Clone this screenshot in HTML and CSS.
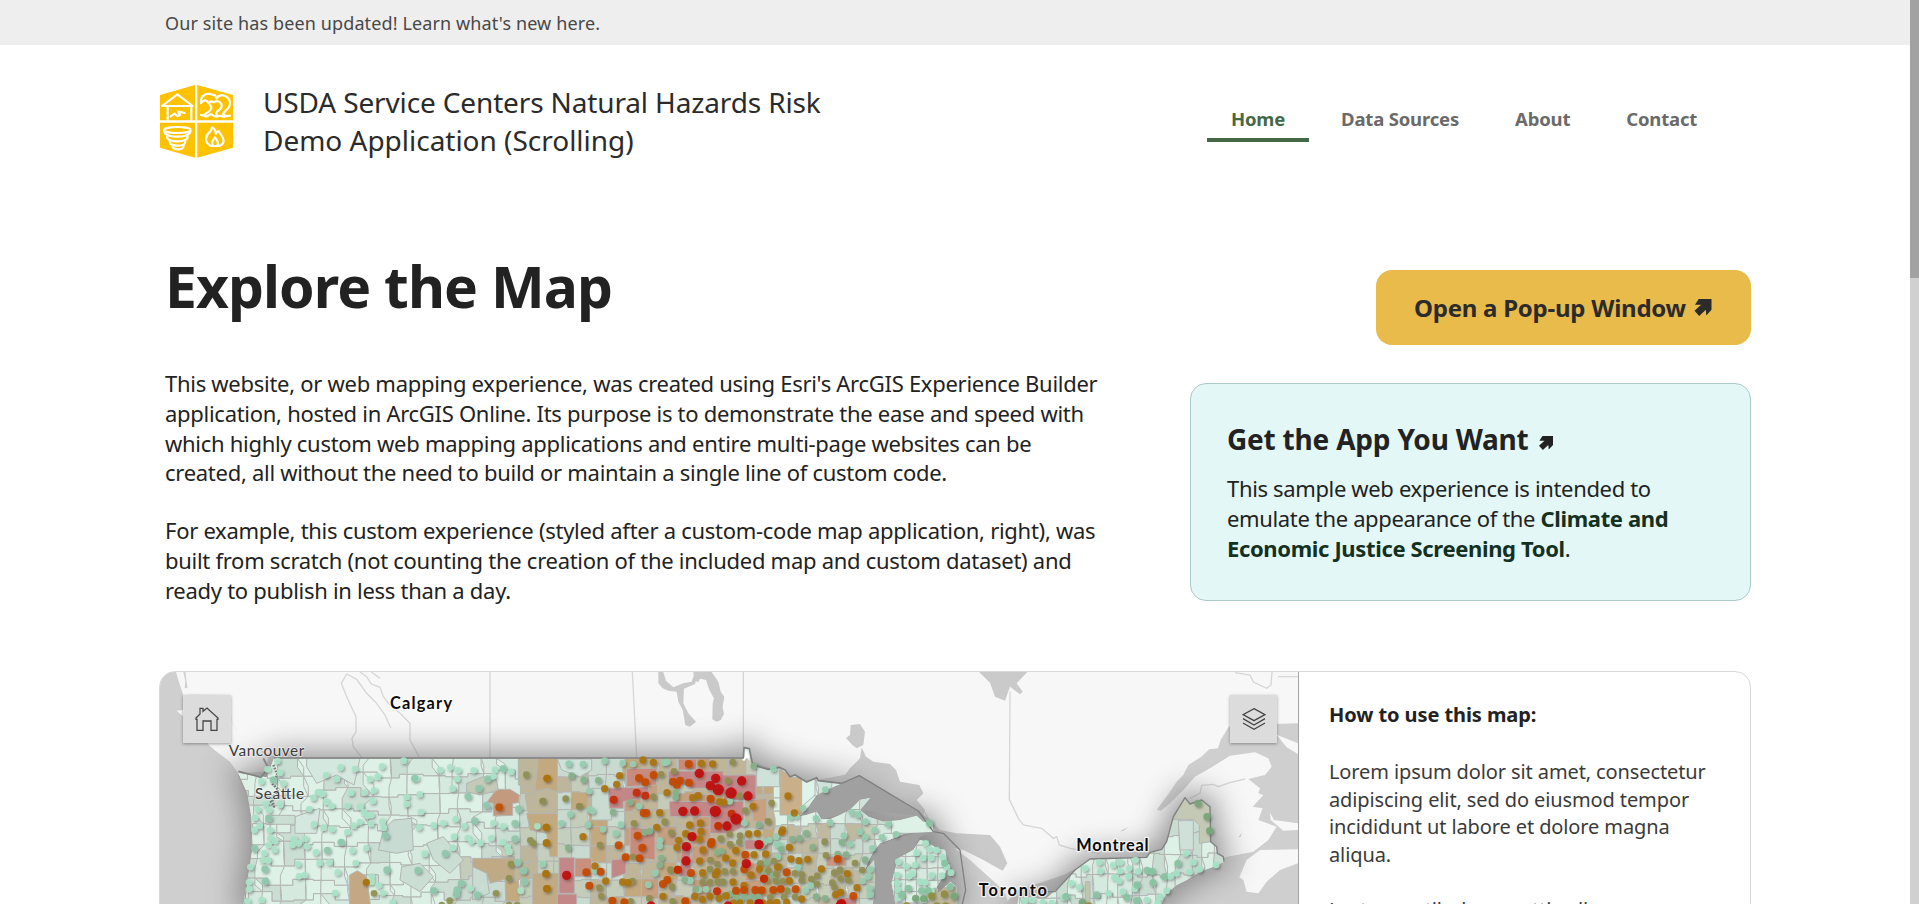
FILE: index.html
```html
<!DOCTYPE html>
<html lang="en">
<head>
<meta charset="utf-8">
<title>USDA Service Centers Natural Hazards Risk</title>
<link rel="stylesheet" href="styles.css">
</head>
<body>
<div class="banner"><span class="banner-text">Our site has been updated! Learn what's new here.</span></div>

<header class="header">
  <svg class="logo" viewBox="30 28 219 219" aria-hidden="true">
    <g fill="#ffc200">
      <path d="M30 58L135 28V134H30Z"/><path d="M142 28L249 58V134H142Z"/>
      <path d="M30 141H135V246L30 216Z"/><path d="M142 141H249V216L142 246Z"/>
    </g>
    <g fill="none" stroke="#fff" stroke-width="6.500" stroke-linejoin="round" stroke-linecap="round">
      <path d="M36 91L82 56L128 91Z M53 91V133 M124 91V133"/>
      <path d="M62 122L74 114L82 122L90 118L84 108L104 112"/>
      <path d="M153 82C150 58 172 50 187 57C198 57 197 62 200 68C211 51 239 59 240 82C241 98 226 103 219 115C222 122 232 122 240 120"/>
      <path d="M153 82C161 72 170 71 176 83C181 76 186 76 192 80C198 74 207 76 213 83C220 92 210 102 201 108C197 114 199 121 207 121"/>
      <path d="M180 88C190 100 177 107 170 112C164 118 160 122 153 118M164 121C175 127 179 110 186 117C192 124 199 124 207 121C212 118 215 123 224 124"/>
      <ellipse cx="82" cy="163" rx="40" ry="9"/>
      <path d="M43 168C45 188 119 188 121 168 M51 183C51 202 113 202 113 183 M59 198C60 214 106 214 106 198 M67 210C68 225 101 225 101 210"/>
      <path d="M183 211C159 199 168 177 181 167C186 162 184 158 187 155C196 160 197 168 197 174C203 171 201 166 205 166C214 178 234 202 207 211Z"/>
      <path d="M190 211C181 201 190 193 195 185C202 194 208 205 200 211"/>
    </g>
  </svg>
  <div class="site-title">USDA Service Centers Natural Hazards Risk<br><span class="site-title-sub">Demo Application (Scrolling)</span></div>
  <nav class="nav">
    <a class="nav-item active">Home</a><a class="nav-item">Data Sources</a><a class="nav-item">About</a><a class="nav-item">Contact</a>
  </nav>
</header>

<main class="main">
  <section class="intro">
    <div class="intro-copy">
      <h1 class="heading">Explore the Map</h1>
      <p class="para">This website, or web mapping experience, was created using Esri's ArcGIS Experience Builder<br>application, hosted in ArcGIS Online. Its purpose is to demonstrate the ease and speed with<br>which highly custom web mapping applications and entire multi-page websites can be<br>created, all without the need to build or maintain a single line of custom code.</p>
      <p class="para">For example, this custom experience (styled after a custom-code map application, right), was<br>built from scratch (not counting the creation of the included map and custom dataset) and<br>ready to publish in less than a day.</p>
    </div>
    <aside class="aside">
      <a class="popup-btn"><span class="popup-label">Open a Pop-up Window</span>
        <svg class="arrow-lg" viewBox="0 0 18 18"><path d="M4.500 0H18V11.500L12.500 17.500L12 11.500L5 18L0 12.500L7 6.200H.500Z" fill="#2b2b2b"/></svg></a>
      <div class="card">
        <h2 class="card-title"><span class="card-label">Get the App You Want</span>
          <svg class="arrow-sm" viewBox="0 0 18 18"><path d="M4.500 0H18V11.500L12.500 17.500L12 11.500L5 18L0 12.500L7 6.200H.500Z" fill="#222"/></svg></h2>
        <p class="card-text">This sample web experience is intended to<br>emulate the appearance of the <b>Climate and<br>Economic Justice Screening Tool</b>.</p>
      </div>
    </aside>
  </section>

  <section class="map-card">
    <div class="map">
      <svg class="map-svg" viewBox="30 36 3414 696" preserveAspectRatio="none">
        <defs>
          <clipPath id="us-clip"><use href="#us"/></clipPath>
          <filter id="glow" x="-10%" y="-50%" width="120%" height="200%"><feGaussianBlur stdDeviation="44"/></filter>
          <filter id="dot-shadow" x="-5%" y="-5%" width="110%" height="110%"><feDropShadow dx="4" dy="5" stdDeviation="2.500" flood-color="#333" flood-opacity=".42"/></filter>
          <path id="us" d="M265 340L350 352L372 295H1780L1782 263L1798 266L1808 315L1855 328L1888 322L1905 330L1920 350L1935 345L1970 366L2000 353L2005 362L2075 370L2040 385L2000 405L1975 440L1945 470L1970 465L2000 455L2015 478L2040 478L2070 465L2100 450L2130 420L2160 414L2130 450L2155 470L2200 485L2250 480L2300 467L2320 485L2348 487L2350 515L2300 518L2265 520L2230 535L2190 550L2170 575L2155 605L2140 640L2172 600L2175 660L2168 740H280L292 650L306 560L302 470L290 400Z
            M2310 540L2290 570L2245 595L2232 640L2225 670L2238 740H2420L2420 680L2400 665L2365 700L2360 680L2380 650L2395 620L2385 570L2360 565L2330 545Z
            M2602 740L2605 712L2690 715L2740 670L2775 630L2820 597L2990 592L3000 577L3035 568L3050 545L3070 470L3105 413L3120 432L3155 420L3180 440L3182 545L3200 560L3202 580L3220 590L3222 605L3190 620L3150 635L3110 660L3080 675L3050 700L3030 740Z"/>
        </defs>
        <rect x="30" y="36" width="3414" height="696" fill="#cfcfcf"/>
        <path fill="#f7f7f7" d="M100 36L106 62L104 85L130 80L115 104L240 105L244 180L262 215L285 195L290 235L330 245L335 275L355 295L345 335L265 340L240 305L200 275L176 255L170 235L100 170L80 152L100 150L100 105L85 60L78 36Z"/>
        <path fill="#f7f7f7" d="M106 36H3444V190L3370 192L3236 200L3212 240L3204 265L3178 268L3154 290L3115 315L3100 345L3080 365L3060 395L3020 450L3033 452L3060 430L3100 390L3135 350L3185 322L3240 287L3315 277L3355 295L3365 320L3345 345L3295 357L3330 385L3325 400L3340 405L3308 440L3338 445L3325 480L3380 500L3355 540L3310 575L3225 592L3180 620L2700 740L2580 740L2560 690L2460 600L2350 515L2300 430L2160 330L1970 366L1780 295H400L355 285L262 215L244 180L240 105L115 104Z"/>
        <path fill="#f7f7f7" d="M3290 600L3330 570L3444 568V610L3390 630L3350 665L3325 700L3290 695L3280 660L3268 652ZM3380 224L3444 250V282L3410 262ZM3360 458L3372 480L3444 490V510L3400 512L3362 480Z"/>
        <g fill="#cacaca">
          <path d="M1525 36H1540L1548 62L1570 82L1600 70L1625 65L1630 50L1640 52L1635 72L1602 86L1600 130L1615 160L1638 185L1620 200L1606 195L1598 150L1585 125L1580 95L1555 92L1538 85L1525 70Z"/>
          <path d="M1630 36H1685L1705 65L1712 95L1723 110L1718 140L1722 162L1712 180L1700 185L1687 178L1688 130L1692 115L1678 90L1668 60L1650 56L1645 66L1632 62Z"/>
          <path d="M2102 195L2130 192L2145 215L2140 255L2120 265L2104 252L2088 234L2100 225Z"/>
          <path d="M2135 262L2130 295L2100 325L2080 352L2075 370L2005 405L1975 440L1945 470L2000 470L2015 478L2130 450L2350 515L2318 475L2325 450L2300 420L2320 400L2308 375L2250 365L2238 330L2220 312L2170 305L2148 290Z"/>
          <path d="M2487 36H2632L2600 70L2618 95L2610 103L2580 80L2565 122L2535 110L2520 68Z"/>
          <path d="M2310 430L2340 480L2370 510L2420 520L2520 525L2550 560L2572 610L2558 632L2500 600L2440 570L2390 560L2400 650L2440 740H2370L2250 700L2180 740H2140V600L2190 540L2350 515Z"/>
          <path d="M2560 740L2600 690L2680 665L2740 645L2780 625L2725 695L2690 740ZM2910 514L2935 501L2920 513ZM3265 532L3275 519L3272 530Z"/>
        </g>
        <g fill="none" stroke="#d6d6d6" stroke-width="4">
          <path d="M664 36L690 55M590 42L574 70L590 110L618 170V215L606 235L610 260L635 292M590 42L620 58L650 100L680 130L705 165L722 203M630 36L650 50L664 72L690 82L700 110L715 130L750 160L780 190V240L808 292M1020 36V292M1447 36L1460 292M1780 36V262"/>
          <path d="M2580 95L2578 418L2605 475L2620 495L2675 505L2710 535L2720 530L2728 555L2760 565L2850 580M3120 415L3150 400L3155 376L3190 373L3205 380L3240 368L3285 357M3255 38L3300 45L3310 66L3350 85L3363 75L3366 36M3384 50H3444"/>
        </g>
        <use href="#us" fill="#7c7c7c" stroke="#7c7c7c" stroke-width="44" filter="url(#glow)" opacity=".8"/>
        <path fill="#a0a0a0" d="M2075 370L2130 347L2300 450L2348 487L2300 467L2130 450L2015 478L1945 470L1975 440L2005 405ZM2350 515L2310 530L2290 570L2245 595L2232 640L2225 670L2238 740H2160V600L2190 550L2300 518Z"/>
        <use href="#us" fill="#def1e6"/>
        <g id="counties" clip-path="url(#us-clip)" stroke="#b3b5b3" stroke-width="3"></g>
        <path fill="#fff" d="M1776 300L1785 288L1787 270L1796 285L1800 302L1790 293L1783 303Z"/>
        <g fill="none" stroke="#808080" stroke-width="5" stroke-linejoin="round">
          <path d="M265 334L333 352L355 325L340 295M372 294H1780L1782 263L1798 266L1808 315L1855 328L1888 322L1905 330L1920 350L1935 345L1970 366L2000 353L2005 362L2075 370"/>
          <path stroke-width="4" d="M2075 370L2128 347L2305 453L2350 515L2380 520L2430 570L2447 690L2435 740M2690 695H2715L2775 630L2820 597L2990 592L3000 577L3035 568L3050 545L3070 470L3105 413L3120 432L3155 420L3180 440L3182 545L3200 560L3202 580L3220 590L3222 605"/>
          <path stroke="#9a9a9a" stroke-width="3" d="M265 345L290 400L302 470L306 560L292 650L284 732"/>
          <path stroke="#777" stroke-width="7" stroke-dasharray="5 4" d="M370 315L382 345L366 370L385 390L366 415L372 440L360 420"/>
        </g>
        <g id="dots" filter="url(#dot-shadow)"></g>
        <g class="city city-major">
          <text x="720" y="146" textLength="186">Calgary</text>
          <text x="2779" y="572" textLength="217">Montreal</text>
          <text x="2486" y="707" textLength="205">Toronto</text>
        </g>
        <g class="city city-minor">
          <text x="236" y="288" textLength="227">Vancouver</text>
          <text x="315" y="416" textLength="147">Seattle</text>
        </g>
      </svg>
      <button class="map-btn map-btn-home" aria-label="Default map view">
        <svg class="map-icon" viewBox="135 139 72 72"><path d="M138 172L150 160V143H159V152L171 142L204 172V176H201V209H183V181H159V209H141V176H138Z" fill="none" stroke="#444" stroke-width="3.800"/></svg>
      </button>
      <button class="map-btn map-btn-layers" aria-label="Layers">
        <svg class="map-icon" viewBox="1023 143 72 72"><path d="M1059 148L1092 166L1059 184L1026 166ZM1026 178L1059 197L1092 178M1026 191L1059 210L1092 191" fill="none" stroke="#444" stroke-width="3.800"/></svg>
      </button>
    </div>
    <div class="help">
      <h3 class="help-title">How to use this map:</h3>
      <p class="help-text">Lorem ipsum dolor sit amet, consectetur<br>adipiscing elit, sed do eiusmod tempor<br>incididunt ut labore et dolore magna<br>aliqua.</p>
      <p class="help-text">Lectus vestibulum mattis ullamcorper</p>
    </div>
  </section>
</main>
<div class="scrollbar"><div class="scrollbar-thumb"></div></div>
<script src="map.js"></script>
</body>
</html>
```
FILE: styles.css
```css
* { box-sizing: border-box; }
html, body { height: 100%; }
body { margin: 0; overflow: hidden; background: #fff; color: #222; font-family: "Noto Sans", "Open Sans", sans-serif; }
h1, h2, h3, p { margin: 0; }
.banner { height: 45px; padding-left: 165px; background: #eee; display: flex; align-items: center; font-size: 18px; letter-spacing: .12px; color: #484848; white-space: nowrap; }
.header { height: 155px; padding-left: 160px; display: flex; align-items: flex-start; }
.logo { width: 73px; height: 73px; margin-top: 40px; flex: none; }
.site-title { margin: 38px 0 0 30px; width: 944px; font-size: 28px; line-height: 38px; letter-spacing: -.14px; color: #2b2b2b; white-space: nowrap; }
.site-title-sub { letter-spacing: -.02px; }
.nav { display: flex; gap: 8px; margin-top: 54px; }
.nav-item { height: 43px; padding: 0 24px; font-size: 18.500px; line-height: 39px; letter-spacing: -.18px; font-weight: 700; color: #6a6a6a; border-bottom: 4px solid transparent; white-space: nowrap; }
.nav-item.active { color: #456846; border-bottom-color: #456846; }
.main { padding-left: 159px; width: 1751px; }
.intro { display: flex; justify-content: space-between; height: 471px; padding-left: 6px; }
.intro-copy { padding-top: 46px; white-space: nowrap; }
.heading { font-size: 57px; line-height: 81px; letter-spacing: -.950px; color: #222; }
.para { font-size: 22px; line-height: 29.800px; letter-spacing: -.28px; margin-bottom: 28px; }
.heading + .para { margin-top: 42px; }
.aside { width: 561px; padding-top: 70px; display: flex; flex-direction: column; align-items: flex-end; }
.popup-btn { width: 375px; height: 75px; border-radius: 16px; background: #e8bb4b; display: flex; align-items: center; padding-left: 38px; font-size: 24px; letter-spacing: -.25px; font-weight: 700; color: #2b2b2b; white-space: nowrap; }
.arrow-lg { width: 18px; height: 17px; margin-left: 8px; }
.card { width: 561px; height: 218px; margin-top: 38px; padding: 35px 0 0 36px; border: 1px solid #a9cccb; border-radius: 16px; background: #e2f7f6; white-space: nowrap; }
.card-title { display: flex; align-items: center; font-size: 28px; line-height: 40px; letter-spacing: -.2px; }
.arrow-sm { width: 16px; height: 14px; margin: 7px 0 0 9px; }
.card-text { margin-top: 14px; font-size: 22px; line-height: 30px; letter-spacing: -.35px; }
.card-text b { color: #14301f; }
.map-card { display: flex; height: 620px; border: 1px solid #d8d8d8; border-radius: 16px; overflow: hidden; width: 1592px; }
.map { position: relative; width: 1139px; border-right: 1px solid #a4a4a4; flex: none; }
.map-svg { display: block; width: 1138px; height: 232px; }
.map-btn { position: absolute; top: 23px; width: 48px; height: 48px; padding: 0; border: 0; background: #dcdcdc; box-shadow: 0 1px 3px rgba(0,0,0,.35); display: flex; align-items: center; justify-content: center; }
.map-btn-home { left: 23px; }
.map-btn-layers { right: 21px; width: 47px; }
.map-icon { width: 24px; height: 24px; }
.city { font-family: Lato, "Open Sans", sans-serif; paint-order: stroke; stroke-linejoin: round; }
.city-major { font-size: 49px; font-weight: 700; fill: #0b0b0b; stroke: rgba(255,255,255,.75); stroke-width: 8px; }
.city-minor { font-size: 46px; fill: #3c3c3c; stroke: rgba(245,245,245,.6); stroke-width: 6px; }
.help { padding: 29px 0 0 30px; white-space: nowrap; color: #3a3a3a; }
.help-title { font-size: 20px; line-height: 28px; letter-spacing: -.08px; color: #222; }
.help-text { margin-top: 27.500px; font-size: 20px; line-height: 27.600px; letter-spacing: -.11px; }
.help-title + .help-text { margin-top: 29px; }
.scrollbar { position: fixed; top: 0; right: 0; width: 9px; height: 100%; background: #d0d0d0; }
.scrollbar-thumb { height: 278px; background: #a2a2a2; }
```
FILE: map.js
```js
const NS = 'http://www.w3.org/2000/svg';
function add(parent, tag, attrs) {
  const el = document.createElementNS(NS, tag);
  for (const k in attrs) el.setAttribute(k, attrs[k]);
  parent.appendChild(el);
}
let seed = 11;
const rnd = () => (seed = (seed * 16807) % 2147483647) / 2147483647;

const PAL = {
  west: ['#def1e6', '#def1e6', '#dcefe5', '#d6e9df', '#cbded4'],
  plains: ['#c5cfbf', '#c2a97f', '#bdb69a', '#c9dad0', '#c9dad0', '#c3cdb9'],
  core: ['#bfb69a', '#c3a97f', '#c49f80', '#bfb69a', '#c5cbb8', '#bfb69a'],
  lake: ['#c6cdb9', '#bfb99f', '#c9dad0', '#c6cdb9'],
  up: ['#dcefe5', '#def1e6', '#d0e3da'],
  east: ['#def1e6', '#d6e9df', '#c9dcd2', '#dcefe5']
};
function zone(x, y) {
  if (x < 960) return 'west';
  if (x < 1110) return y > 560 ? 'plains' : 'west';
  if (x < 1430) return 'plains';
  if (x < 1880) return 'core';
  if (x < 2180) return y > 510 ? 'lake' : 'up';
  return 'east';
}

// county mesh with shared, jittered corners
const counties = document.getElementById('counties');
function mesh(x0, x1, y0, y1, w, h, jitter) {
  const cols = Math.ceil((x1 - x0) / w), rows = Math.ceil((y1 - y0) / h), pts = [];
  for (let r = 0; r <= rows; r++) {
    pts.push([]);
    for (let c = 0; c <= cols; c++) pts[r].push([x0 + c * w + (rnd() - .5) * jitter, y0 + r * h + (r ? (rnd() - .5) * jitter : 0)]);
  }
  for (let r = 0; r < rows; r++) for (let c = 0; c < cols; c++) {
    const a = pts[r][c], b = pts[r][c + 1], d = pts[r + 1][c + 1], e = pts[r + 1][c];
    const p = PAL[zone(a[0] + w / 2, a[1] + h / 2)];
    add(counties, 'path', {
      d: `M${a}L${(a[0] + b[0]) / 2},${a[1]}V${b[1]}H${b[0]}V${(b[1] + d[1]) / 2}L${d}L${(d[0] + e[0]) / 2},${d[1]}V${e[1]}H${e[0]}V${(a[1] + e[1]) / 2}Z`,
      fill: p[Math.floor(rnd() * p.length)]
    });
  }
}
mesh(260, 1110, 295, 740, 66, 52, 34);
mesh(1110, 1870, 295, 740, 52, 52, 9);
mesh(1870, 2200, 320, 740, 44, 44, 12);
mesh(2200, 2440, 520, 740, 33, 35, 3);
mesh(2580, 3240, 400, 740, 36, 62, 18);

// shaded counties: fill, then outline points
[
  ['#d5e8df', '470,295 630,295 612,375 560,345 500,370 470,320'], ['#c8dbd2', '700,510 730,480 785,475 790,570 740,580 685,570'],
  ['#d5e8df', '435,470 510,445 500,520 435,520'], ['#cbded4', '348,466 435,466 435,493 348,493'],
  ['#cbded4', '830,550 880,530 940,600 900,640 850,600'], ['#cbded4', '755,620 810,610 850,650 810,695 750,660'],
  ['#c4a883', '599,645 622,632 650,650 662,740 599,740'], ['#c49a7e', '1012,425 1040,388 1080,388 1108,405 1106,428 1088,430 1088,466 1030,468 1030,430'],
  ['#c3cbb8', '950,370 1000,350 1040,360 1045,390 990,405 950,395'], ['#bdb69a', '1105,295 1165,295 1155,385 1105,375'],
  ['#c3a97f', '1165,295 1222,295 1222,395 1155,390'], ['#bdb69a', '1125,405 1190,385 1222,395 1222,460 1135,460'],
  ['#c3a97f', '1130,460 1222,460 1222,590 1200,590 1190,520 1140,510'], ['#bfaa85', '968,595 1095,595 1095,650 1020,670 1010,640 968,620'],
  ['#c0ab86', '1148,640 1225,640 1225,740 1148,740'], ['#c9dcd3', '968,620 1010,640 1018,700 968,720'],
  ['#cfe2d9', '1222,297 1325,297 1325,330 1290,350 1235,330'], ['#cadcd2', '1325,385 1385,385 1385,480 1325,480'],
  ['#c48787', '1227,593 1273,593 1273,700 1227,700'], ['#c48787', '1222,702 1280,702 1280,740 1222,740'], ['#c9907d', '1275,595 1325,595 1325,650 1275,650'],
  ['#c48787', '1385,600 1428,595 1428,640 1385,655'], ['#c48787', '1375,385 1495,380 1500,410 1420,425 1420,445 1378,445'],
  ['#c98c7c', '1430,325 1520,325 1520,375 1430,380'], ['#c98c7c', '1440,500 1515,510 1515,600 1440,590'],
  ['#c48787', '1555,333 1720,333 1720,345 1818,345 1818,420 1720,420 1720,385 1620,385 1620,375 1555,375'],
  ['#c48787', '1558,424 1780,424 1780,500 1740,520 1680,520 1680,470 1560,470'], ['#c98c7c', '1585,297 1640,297 1640,330 1585,330'],
  ['#c48787', '1785,540 1855,540 1855,568 1785,568'], ['#c48787', '1595,560 1620,560 1625,650 1590,650'],
  ['#c9b08a', '1890,325 1920,350 1955,355 1955,465 1890,465'], ['#cfe2d9', '1820,320 1888,322 1888,380 1820,380'],
  ['#c9a080', '1800,420 1850,415 1850,485 1810,485'], ['#e0f3ea', '1955,355 1995,358 1995,405 1955,440'], ['#c9967f', '2030,590 2088,590 2088,618 2030,618'],
  ['#c48787', '2070,712 2120,712 2120,740 2070,740'], ['#c3c9b4', '3068,478 3105,413 3120,432 3155,420 3180,440 3182,545 3148,550 3148,495 3130,478'],
  ['#cfe0d8', '3085,482 3130,482 3130,570 3090,570'], ['#c0c5ad', '2806,665 2820,665 2820,740 2806,740'], ['#bdb69a', '2350,685 2420,680 2420,740 2330,740']
].forEach(([fill, points]) => add(counties, 'polygon', { points, fill }));

// service centers by risk class: colour, radius, x offset, positions
const L = 0, M = 1170, R = 2250;
[
  ['#a9e3c7', 10, L, '382,303 390,338 400,370 572,322 560,357 528,345 615,327 660,357 683,350 696,319 761,302 799,355 870,330 901,322 924,331 921,357 971,331 1035,329 1029,349 1083,335 908,385 672,391 644,397 603,398 668,423 517,401 504,397 490,413 529,425 545,438 592,438 631,440 642,457 652,467 664,465 770,411 770,432 809,403 813,456 391,434 357,450 347,432 323,448 315,473 334,364 353,328 478,447 492,493 521,503 546,507 611,497 630,486 663,491 697,485 701,503 592,516 807,502 851,496 880,490 943,499 917,477 329,497 313,509 360,511 361,534 375,543 356,555 374,569 343,579 465,536 432,538 446,550 428,554 471,559 498,577 572,546 607,571 649,564 824,581 909,563 912,530 953,534 964,544 991,548 1024,534 1030,489 1059,499 1058,547 1073,560 1078,575 338,600 355,601 444,612 509,608 538,607 563,637 617,609 464,645 447,649 301,621 297,667 298,688 292,724 335,720 665,650 687,676 699,699 665,665 962,685 1162,499 1178,611 1112,692 555,699 728,728'],
  ['#8fc8ab', 11, L, '357,475 314,565 345,627 346,664 532,571 574,547 707,527 886,580 804,631 711,630 1060,326 1013,357 954,409 1010,436 1106,447 974,482 1095,490 1095,537 1103,607 1121,632 1124,665 934,670 921,690 851,692 919,703 982,705 987,385 794,355 370,360'],
  ['#8e9050', 10, L, '1129,344 1179,423 1141,541 1150,550 1083,612 1077,655 1038,700 1101,735 1077,735 899,722 672,700 875,735'],
  ['#a87008', 11, L, '1191,355 1189,502 1189,549 1188,641 1190,686 649,667'],
  ['#c05200', 12, L, '1048,442'],
  ['#96cdb0', 10, M, '86,311 129,312 194,302 248,309 279,312 374,308 382,306 148,393 149,448 157,453 91,463 64,490 144,494 189,508 243,494 228,520 297,438 8,612 360,541 359,558 164,631 345,640 325,674 569,424 613,489 700,326 789,445 751,471 768,468 828,475 870,488 856,389 936,457 954,464 976,485 960,515 912,527 708,530 710,553 720,556 688,540 673,547 713,590 773,622 997,565 991,628 984,649 967,663 989,685 990,704 812,677 797,691 1004,510 1026,532 1045,492 1068,523 976,531 930,552 450,662 477,690 498,688'],
  ['#86b18a', 10, M, '95,347 131,359 175,361 85,563 408,398 407,412 314,517 329,514 364,594 359,615 271,427 434,659 468,687 657,494 641,318 219,456 799,520 779,535 757,537 818,561 906,547 893,582 918,584 975,599 680,607 672,636 700,648 612,710 635,712 589,713 570,702 655,711 855,715 828,710 665,557 724,568 545,573 532,577'],
  ['#8f8d50', 10, M, '8,423 77,416 118,439 119,439 363,343 340,410 402,334 374,485 394,518 564,362 598,407 616,452 695,429 684,484 569,522 542,536 570,552 600,527 598,546 511,600 532,612 510,627 554,634 579,634 533,665 488,666 510,666 490,645 549,665 396,680 178,683 279,591 282,490 180,555 328,715 398,724 661,610 702,603 718,620 709,641 685,631 765,640 785,643 681,660 708,663 728,663 747,661 785,661 832,647 831,672 814,657 854,545 858,586 900,629 883,638 902,655 877,668 884,682 925,661 945,609 967,630 578,306 765,711 742,692 691,712 732,711 391,629 184,708 277,663 272,724 535,497 553,709'],
  ['#aa7410', 11, M, '22,355 19,502 20,549 18,641 22,686 340,307 309,300 239,347 230,373 194,386 129,530 381,398 458,413 474,407 484,310 518,312 539,425 552,427 359,458 350,502 481,489 449,495 483,514 437,521 416,541 411,562 478,537 534,498 489,570 479,603 557,594 587,571 578,609 652,520 626,522 728,510 725,517 744,408 639,439 763,459 748,562 642,584 677,582 753,597 777,602 803,598 488,638 526,644 532,635 633,645 659,627 713,621 844,627 579,666 612,676 748,663 197,663 248,666 264,668 165,618 369,709 464,709 487,718 510,709 559,707 537,715 922,641 951,683 902,697 887,704 785,717 710,727 690,729 668,729 580,729 600,729 630,729 655,729 740,727'],
  ['#c34a00', 12, M, '341,345 297,354 316,367 399,365 411,374 447,368 420,362 446,312 512,416 319,459 311,459 293,527 307,563 299,595 236,556 139,637 182,635 148,677 382,660 257,592 369,672 515,546 513,552 616,584 413,629 453,639 740,637 613,628 672,656 588,692 612,690 646,690 665,691 700,690 722,687 767,688 893,597 940,708 217,722 436,724 253,727'],
  ['#c62a05', 12, M, '290,398 316,407 221,419 575,461 535,498 531,694 414,629 672,656'],
  ['#bf0a0c', 14, M, '478,340 527,355 511,377 605,363 624,408 429,454 464,453 456,530 439,560 438,603 561,498 657,554 619,611 80,646 657,731 333,738 564,738 904,731'],
  ['#bf0a0c', 17, M, '535,389 573,399 526,454 588,477 903,738'],
  ['#a5e2c6', 10, R, '50,578 77,550 89,568 110,570 128,592 94,593 69,594 20,619 45,615 141,621 95,646 126,647 37,641 27,649 -5,605 60,665 76,667 94,694 153,638 598,607 640,615 661,607 706,600 555,625 601,634 660,633 687,625 714,634 643,652 686,649 657,662 829,640 869,636 899,628 880,607 811,649 948,615 858,580 800,692 780,712 740,720 704,686 668,695 625,700 514,670 538,682 397,720 375,722 455,729 773,730 -8,645 -8,669 -7,689 -5,713 428,727 490,712'],
  ['#88c3a2', 11, R, '25,685 65,692 85,692 5,705 88,489 151,680 134,610 741,631 756,634 834,610 793,650 759,668 711,675 590,705 680,712 498,710 710,722'],
  ['#76a678', 11, R, '894,430 921,470 929,512 47,715 71,716 162,708 547,727'],
  ['#8f8d40', 11, R, '95,708 133,702 20,738 110,738 137,738 566,738']
].forEach(([fill, r, off, list]) => {
  const g = document.getElementById('dots');
  list.split(' ').forEach(p => {
    const [x, y] = p.split(',').map(Number);
    add(g, 'circle', { cx: x + off, cy: y, r, fill, 'fill-opacity': .92 });
  });
});
```
